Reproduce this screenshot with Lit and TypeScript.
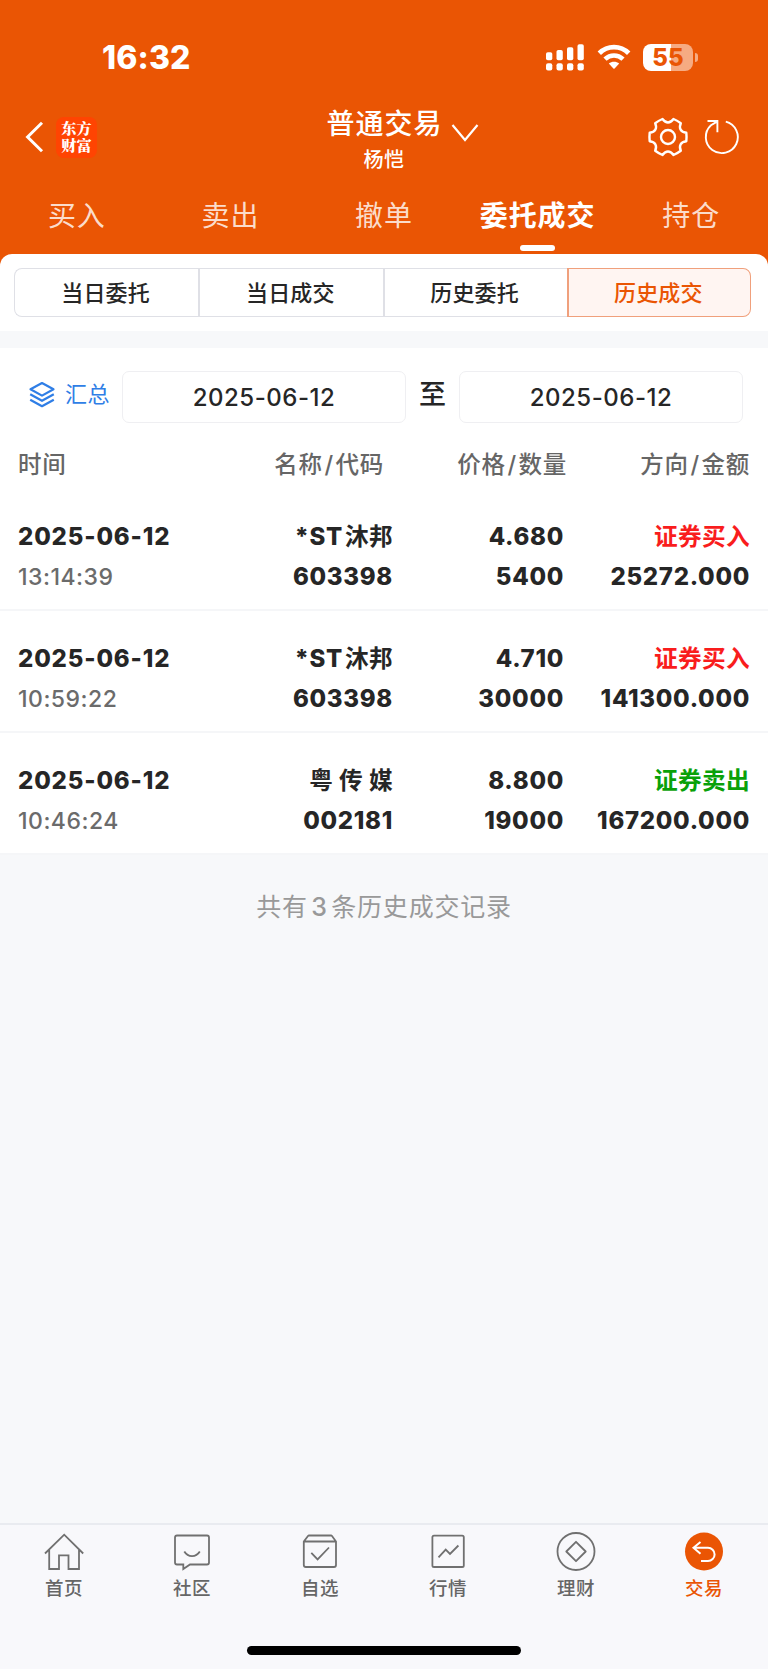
import { LitElement, html, css, svg } from "lit";
import { customElement, state } from "lit/decorators.js";
import { classMap } from "lit/directives/class-map.js";

interface Deal {
  date: string;
  time: string;
  prefix: string;
  name: string;
  code: string;
  price: string;
  qty: string;
  side: "buy" | "sell";
  amount: string;
}

const DEALS: Deal[] = [
  { date: "2025-06-12", time: "13:14:39", prefix: "*ST", name: "沐邦", code: "603398", price: "4.680", qty: "5400", side: "buy", amount: "25272.000" },
  { date: "2025-06-12", time: "10:59:22", prefix: "*ST", name: "沐邦", code: "603398", price: "4.710", qty: "30000", side: "buy", amount: "141300.000" },
  { date: "2025-06-12", time: "10:46:24", prefix: "", name: "粤 传 媒", code: "002181", price: "8.800", qty: "19000", side: "sell", amount: "167200.000" },
];

/* Six-lobed gear outline centred on the origin. */
const gearPath = (() => {
  const pt = (deg: number, r: number) => {
    const a = (deg * Math.PI) / 180;
    return `${(r * Math.cos(a)).toFixed(2)} ${(r * Math.sin(a)).toFixed(2)}`;
  };
  let d = `M${pt(-13, 18.8)}`;
  for (let k = 0; k < 6; k++) {
    d += `Q${pt(60 * k, 18.8)} ${pt(60 * k + 13, 18.8)}C${pt(60 * k + 21, 13.6)} ${pt(60 * k + 39, 13.6)} ${pt(60 * k + 47, 18.8)}`;
  }
  return d + "Z";
})();

@customElement("status-bar")
class StatusBar extends LitElement {
  static styles = css`
    :host { display: flex; height: 94px; padding: 20px 70.5px 0 102px; box-sizing: border-box; align-items: center; justify-content: space-between; color: #fff; }
    .clock { font-size: 32px; font-weight: 800; line-height: 40px; letter-spacing: 0.1px; margin-top: 1px; }
    .icons { display: flex; align-items: center; }
    .signal { width: 38px; height: 27px; margin-right: 13px; }
    .wifi { width: 34px; height: 26px; margin-right: 12.5px; }
    .battery { display: flex; align-items: center; justify-content: center; width: 50px; height: 27px; border-radius: 8px; background: linear-gradient(90deg, #fff 55%, #f6ab82 55%); color: #ea5504; font-size: 24px; font-weight: 800; line-height: 27px; }
    .cap { width: 3px; height: 9px; margin-left: 1.5px; border-radius: 0 4px 4px 0; background: #f6ab82; }
  `;
  render() {
    return html`
      <span class="clock">16:32</span>
      <div class="icons">
        <svg class="signal" viewBox="0 0 38 27" fill="#fff">
          <rect x="0" y="8.3" width="6.3" height="8" rx="1.8" /><rect x="10.5" y="6" width="6.3" height="10.3" rx="1.8" />
          <rect x="21" y="3.2" width="6.3" height="13.1" rx="1.8" /><rect x="31.5" y="0.3" width="6.3" height="16" rx="1.8" />
          ${[0, 10.5, 21, 31.5].map((x) => svg`<rect x=${x} y="19.3" width="6.3" height="7.2" rx="2" />`)}
        </svg>
        <svg class="wifi" viewBox="0 0 34 26">
          <path d="M2.3 9.2C10.5 1 23.5 1 31.7 9.2" fill="none" stroke="#fff" stroke-width="4.8" />
          <path d="M8 15.2C13.2 10.2 20.8 10.2 26 15.2" fill="none" stroke="#fff" stroke-width="4.6" />
          <path d="M11.8 19.6C14.8 17 19.2 17 22.2 19.6L17.6 24.4Q17 25 16.4 24.4Z" fill="#fff" />
        </svg>
        <span class="battery">55</span><span class="cap"></span>
      </div>`;
  }
}

@customElement("title-bar")
class TitleBar extends LitElement {
  static styles = css`
    :host { display: grid; grid-template-columns: 1fr 160px 1fr; height: 86px; color: #fff; }
    .left { display: flex; align-items: center; padding: 0 0 0 25px; }
    .back { width: 19px; height: 32px; margin-right: 12px; }
    .logo { width: 41px; height: 41px; padding-top: 2px; box-sizing: border-box; text-align: center; border-radius: 8px; background: #ff4402; font: 900 15.2px/17.5px "Noto Serif CJK SC", "Noto Sans CJK SC", sans-serif; }
    .middle { display: flex; flex-direction: column; padding-top: 11px; align-items: center; }
    .title { font-size: 28px; font-weight: 500; letter-spacing: 1px; line-height: 38px; margin-right: -1px; white-space: nowrap; }
    .user { font-size: 20px; font-weight: 500; letter-spacing: 0.4px; line-height: 32px; margin-top: 1px; }
    .right { display: flex; align-items: center; }
    .down { width: 28px; height: 18px; margin: -8px 0 0 -13px; }
    .gear { width: 42px; height: 42px; margin-left: 167.7px; flex: none; }
    .reload { width: 38px; height: 40px; margin-left: 14.8px; flex: none; }
    svg { fill: none; stroke: #fff; flex: none; }
  `;
  render() {
    return html`
      <div class="left">
        <svg class="back" viewBox="0 0 19 32" stroke-width="3"><path d="M17 1.8L2.6 16L17 30.2" /></svg>
        <div class="logo">东方<br />财富</div>
      </div>
      <div class="middle"><span class="title">普通交易</span><span class="user">杨恺</span></div>
      <div class="right">
        <svg class="down" viewBox="0 0 28 18" stroke-width="2.2"><path d="M1.5 1L14 16L26.5 1" /></svg>
        <svg class="gear" viewBox="-21 -21 42 42" stroke-width="2.4" stroke-linejoin="round"><path d=${gearPath} /><circle r="7" /></svg>
        <svg class="reload" viewBox="-19 -20 38 40" stroke-width="1.9"><path d="M3.8 -15.4A16 16 0 1 1 -11 -11.7L-5 -15.4M-14.5 -16H-4.6V-4.8" /></svg>
      </div>`;
  }
}

@customElement("trade-nav")
class TradeNav extends LitElement {
  static styles = css`
    :host { display: grid; grid-template-columns: repeat(5, 1fr); height: 74px; }
    .tab { display: flex; flex-direction: column; align-items: center; padding-top: 16px; color: #fbdccb; font-size: 28px; letter-spacing: 0.9px; line-height: 40px; }
    .on { color: #fff; font-weight: 700; }
    .on::after { content: ""; width: 35px; height: 5.5px; margin-top: 9px; border-radius: 3px; background: #fff; }
  `;
  render() {
    return html`${["买入", "卖出", "撤单", "委托成交", "持仓"].map((t) => html`<span class=${classMap({ tab: true, on: t === "委托成交" })}>${t}</span>`)}`;
  }
}

@customElement("deal-row")
class DealRow extends LitElement {
  static properties = { deal: { attribute: false } };
  declare deal: Deal;
  static styles = css`
    :host { display: grid; grid-template-columns: 200px 175px 171px 1fr; height: 122px; box-sizing: border-box; padding: 28px 18px 0; border-bottom: 2px solid #f5f6f8; background: #fff; color: #262626; font-size: 24px; font-weight: 800; line-height: 40px; letter-spacing: 0.7px; }
    .cell { display: flex; flex-direction: column; align-items: flex-end; white-space: nowrap; }
    .first { align-items: flex-start; letter-spacing: 0.85px; }
    .time { color: #6b6b6b; font-weight: 500; font-size: 23px; letter-spacing: 0.5px; }
    .cjk { letter-spacing: 0.3px; font-weight: 700; font-size: 23.7px; }
    .name { display: flex; gap: 2px; }
    .buy { color: #f91d1d; }
    .sell { color: #09a109; }
  `;
  render() {
    const d = this.deal;
    return html`
      <div class="cell first"><span>${d.date}</span><span class="time">${d.time}</span></div>
      <div class="cell"><span class="name"><span>${d.prefix}</span><span class="cjk">${d.name}</span></span><span>${d.code}</span></div>
      <div class="cell"><span>${d.price}</span><span>${d.qty}</span></div>
      <div class="cell"><span class="cjk ${d.side}">${d.side === "buy" ? "证券买入" : "证券卖出"}</span><span>${d.amount}</span></div>`;
  }
}

@customElement("bottom-nav")
class BottomNav extends LitElement {
  static styles = css`
    :host { display: flex; flex-direction: column; height: 146px; box-sizing: border-box; border-top: 2px solid #e9ebf0; background: #f8f8fb; }
    .items { display: grid; grid-template-columns: repeat(6, 1fr); height: 121px; }
    .item { display: flex; flex-direction: column; align-items: center; padding-top: 7px; color: #666; font-size: 18.5px; font-weight: 500; line-height: 30px; letter-spacing: 0.4px; }
    .item svg { width: 40px; height: 42px; fill: none; stroke: #707070; stroke-width: 1.8; }
    .label { margin-top: -1px; }
    .item.on { color: #ea5504; }
    .home { width: 274px; height: 9px; border-radius: 5px; background: #000; margin: 0 auto; }
  `;
  render() {
    const items = [
      { t: "首页", i: svg`<path d="M1 21.5L20.2 2.7L39.2 21.5M5.2 18V37H15V23.3H24.5V37H35V18" />` },
      { t: "社区", i: svg`<path d="M5 3.5H35Q37 3.5 37 5.5V30.5Q37 32.5 35 32.5H18L11.3 37V32.5H5Q3 32.5 3 30.5V5.5Q3 3.5 5 3.5ZM12.3 19.5C16 25.6 24 25.6 27.8 19.5" />` },
      { t: "自选", i: svg`<path d="M3.8 9.5L8 4Q8.4 3.5 9 3.5H31Q31.6 3.5 32 4L36 9.5V33Q36 35 34 35H5.8Q3.8 35 3.8 33ZM3.8 9.5H36M11.3 20.8L17.6 27.4L29 15.5" />` },
      { t: "行情", i: svg`<rect x="4.4" y="3.6" width="31.4" height="31.4" rx="1.6" /><path d="M10.5 25.4L17.7 17.6L22 22L30.4 13.5" />` },
      { t: "理财", i: svg`<circle cx="20" cy="19.5" r="18.5" /><path d="M20 9.8L29.7 19.5L20 29.2L10.3 19.5Z" stroke-linejoin="round" />` },
      { t: "交易", i: svg`<circle cx="20" cy="19.5" r="19" fill="#ea5504" stroke="none" /><path d="M16.5 10L9.5 15.8L16.5 21.8M9.5 15.8H24A6.5 6.5 0 0 1 24 29H17" stroke="#fff" stroke-width="2" />` },
    ];
    return html`
      <div class="items">
        ${items.map((x) => html`<div class=${classMap({ item: true, on: x.t === "交易" })}><svg viewBox="0 0 40 42">${x.i}</svg><span class="label">${x.t}</span></div>`)}
      </div>
      <div class="home"></div>`;
  }
}

@customElement("app-root")
class AppRoot extends LitElement {
  @state() private segment = 3;

  static styles = css`
    :host { display: flex; flex-direction: column; width: 768px; height: 1669px; overflow: hidden; background: #f7f8fa; font-family: Inter, "Noto Sans CJK SC", sans-serif; color: #262626; }
    .top { background: #ea5504; }
    .panel { box-sizing: border-box; height: 77px; padding: 14px 17px 0 14px; border-radius: 12px 12px 0 0; background: #fff; }
    .segments { display: grid; grid-template-columns: repeat(4, 1fr); height: 49px; }
    .seg { display: flex; align-items: center; justify-content: center; box-sizing: border-box; padding: 0 2px 4px 0; border: 1px solid #dfe0e6; border-left-width: 2px; border-right-width: 0; font-size: 22px; font-weight: 500; letter-spacing: 0.2px; }
    .seg:first-child { border-left-width: 1px; border-radius: 8px 0 0 8px; }
    .seg:last-child { border-radius: 0 8px 8px 0; border-right-width: 1px; }
    .seg.on { border-color: #f0a07c; background: #fff5f2; color: #ea5504; }
    .filter { display: flex; align-items: center; height: 75px; margin-top: 17px; padding: 23px 25px 0 29px; box-sizing: border-box; background: #fff; }
    .sum { display: flex; align-items: center; width: 93px; color: #2f7ee6; font-size: 22px; letter-spacing: 0.4px; margin-top: -5px; }
    .sum svg { width: 26px; height: 27px; margin: 0 10px 0 0; fill: none; stroke: #2f7ee6; stroke-width: 2.2; stroke-linejoin: round; }
    .sum span { margin-top: -6px; }
    .date { display: flex; align-items: center; justify-content: center; width: 284px; height: 52px; box-sizing: border-box; border: 1px solid #efeff2; border-radius: 7px; font-size: 24px; font-weight: 500; letter-spacing: 0.5px; }
    .to { width: 53px; text-align: center; font-size: 27px; font-weight: 500; margin-top: -9px; }
    .head { display: grid; grid-template-columns: 200px 166px 183px 1fr; height: 66px; box-sizing: border-box; padding: 21.5px 18px 0; background: #fff; color: #666; font-size: 23.5px; font-weight: 500; line-height: 40px; letter-spacing: 0.7px; text-align: right; white-space: nowrap; }
    .head .first { text-align: left; }
    .slash { margin: 0 1.8px; }
    .foot { margin-top: 32px; text-align: center; color: #999; font-size: 25px; line-height: 40px; letter-spacing: 0.8px; flex: 1; }
    .digit { margin: 0 3.5px; font-weight: 500; }
  `;

  render() {
    const heads = [["名称", "代码"], ["价格", "数量"], ["方向", "金额"]];
    return html`
      <div class="top">
        <status-bar></status-bar>
        <title-bar></title-bar>
        <trade-nav></trade-nav>
        <div class="panel">
          <div class="segments">
            ${["当日委托", "当日成交", "历史委托", "历史成交"].map((t, i) => html`<div class=${classMap({ seg: true, on: i === this.segment })} @click=${() => (this.segment = i)}>${t}</div>`)}
          </div>
        </div>
      </div>
      <div class="filter">
        <div class="sum">
          <svg viewBox="0 0 26 27"><path d="M13 2L24.5 8.2L13 14.6L1.5 8.2ZM1.2 13.2L13 19.8L24.8 13.2M1.2 18.7L13 25.2L24.8 18.7" /></svg><span>汇总</span>
        </div>
        <div class="date">2025-06-12</div>
        <div class="to">至</div>
        <div class="date">2025-06-12</div>
      </div>
      <div class="head"><span class="first">时间</span>${heads.map(([a, b]) => html`<span>${a}<span class="slash">/</span>${b}</span>`)}</div>
      ${DEALS.map((d) => html`<deal-row .deal=${d}></deal-row>`)}
      <div class="foot">共有<span class="digit">3</span>条历史成交记录</div>
      <bottom-nav></bottom-nav>`;
  }
}
